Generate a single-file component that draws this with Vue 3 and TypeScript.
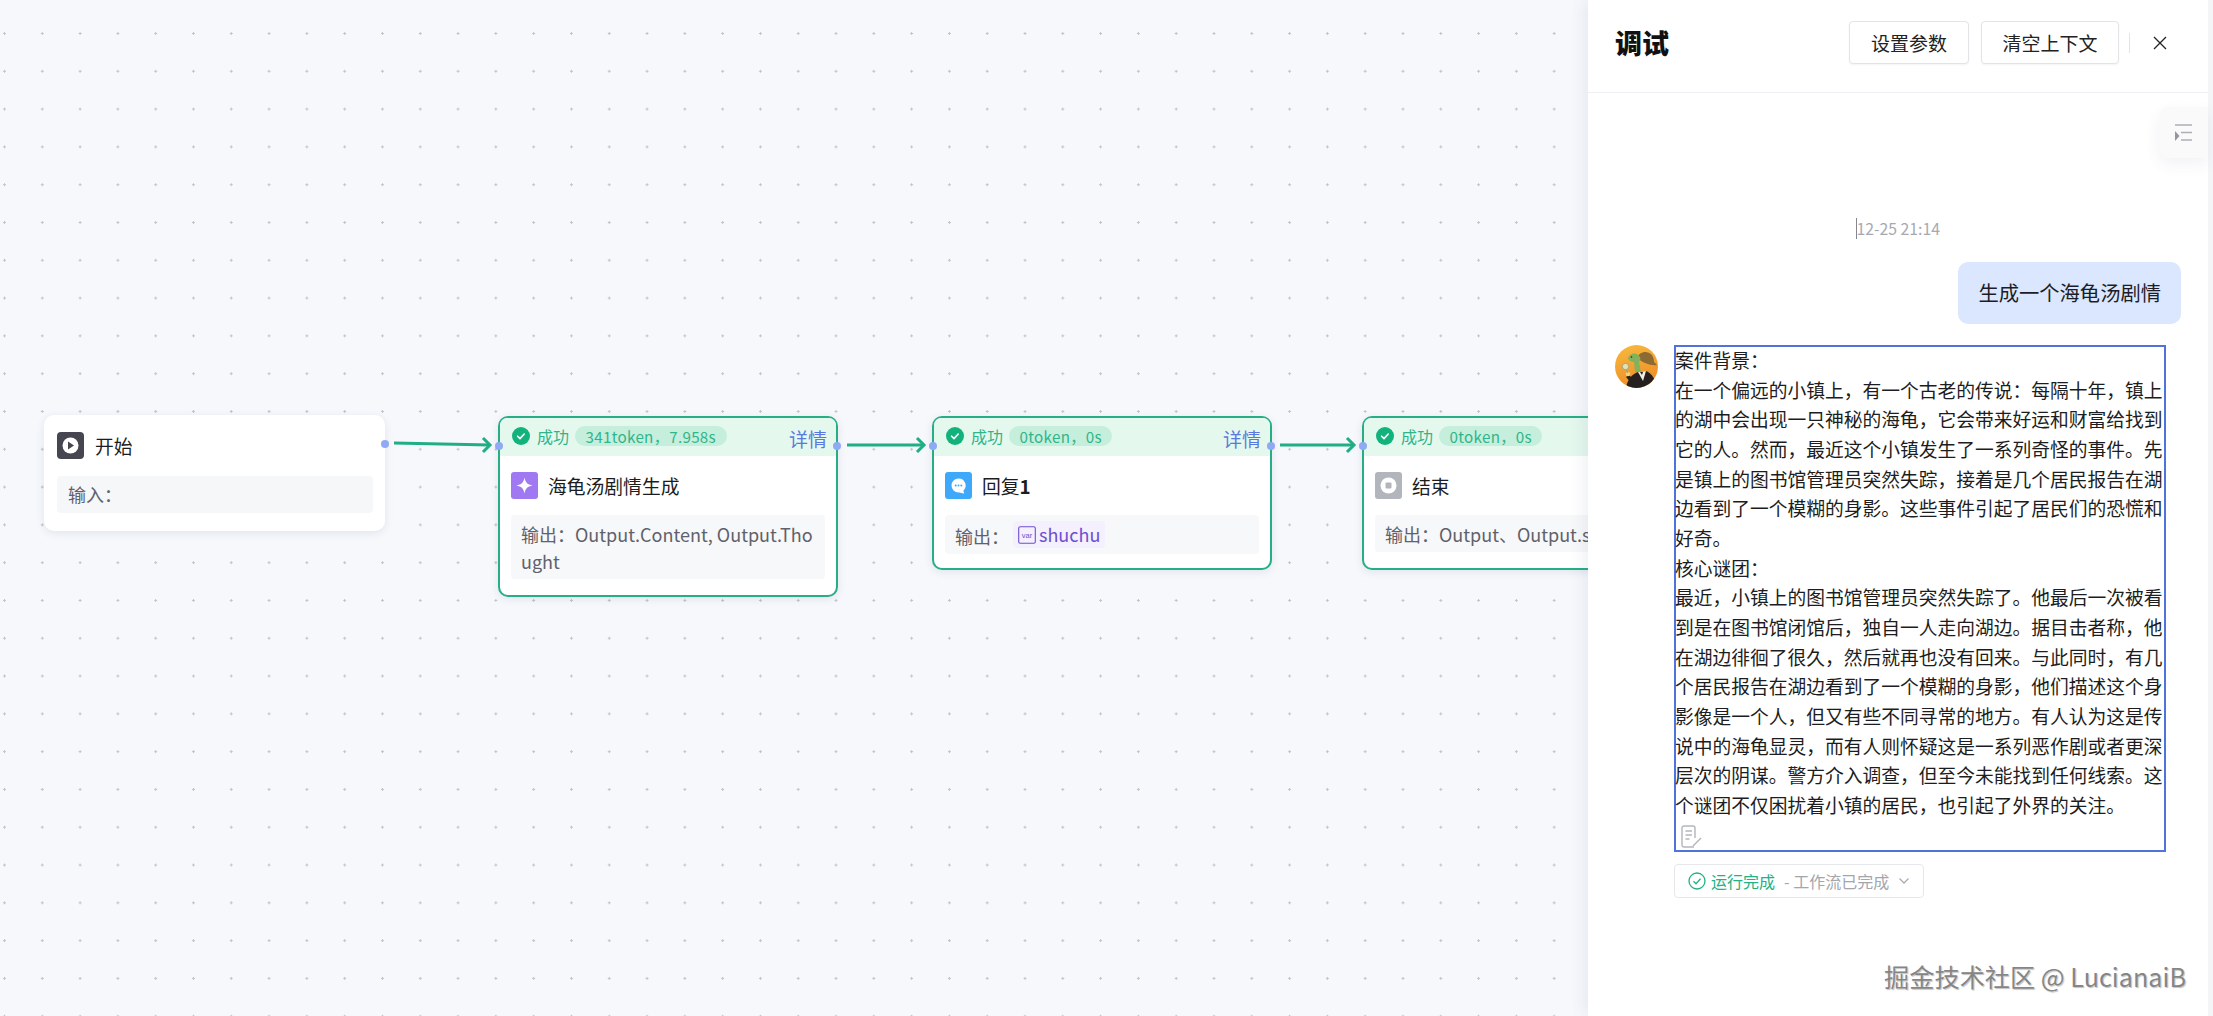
<template>
  <div class="page">
    <!-- Workflow canvas -->
    <div class="canvas">
      <svg class="edges" width="1588" height="1016">
        <g v-for="edge in edges" :key="edge.x1" fill="none" stroke="#1fae85" stroke-width="3">
          <path :d="`M${edge.x1} ${edge.y1} L${edge.x2} ${edge.y2}`" />
          <path :d="`M${edge.x2 - 7} ${edge.y2 - 7} L${edge.x2} ${edge.y2} L${edge.x2 - 7} ${edge.y2 + 7}`" />
        </g>
      </svg>

      <!-- Start node -->
      <div class="node node-start">
        <div class="node-title">
          <span class="node-icon icon-dark">
            <svg viewBox="0 0 27 27" width="27" height="27">
              <circle cx="13.5" cy="13.5" r="8" fill="#fff" />
              <path d="M11 9.6v7.8l6-3.9z" fill="#45464f" />
            </svg>
          </span>
          开始
        </div>
        <div class="node-body">输入：</div>
        <span class="handle handle-right" />
      </div>

      <!-- Run result nodes -->
      <div v-for="node in nodes" :key="node.title" class="node node-run" :class="node.cls">
        <div class="run-head">
          <svg class="run-check" viewBox="0 0 18 18" width="18" height="18">
            <circle cx="9" cy="9" r="9" fill="#12b27c" />
            <path d="M5.6 9.2l2.4 2.4 4.2-4.6" fill="none" stroke="#fff" stroke-width="1.6" stroke-linecap="round" stroke-linejoin="round" />
          </svg>
          <span class="run-state">成功</span>
          <span class="run-pill">{{ node.usage }}</span>
          <span v-if="node.detail" class="run-detail">详情</span>
        </div>
        <div class="node-title">
          <span class="node-icon" :class="node.iconCls">
            <svg v-if="node.icon === 'spark'" viewBox="0 0 27 27" width="27" height="27">
              <path d="M13.5 5.5c.9 5 3 7.1 8 8-5 .9-7.1 3-8 8-.9-5-3-7.1-8-8 5-.9 7.1-3 8-8z" fill="#fff" />
            </svg>
            <svg v-else-if="node.icon === 'chat'" viewBox="0 0 27 27" width="27" height="27">
              <path d="M13.5 6.5a7 7 0 1 0 0 14c1.9 0 3.4.7 5.8 1-.6-.9-.9-2-.8-3a7 7 0 0 0-5-12z" fill="#fff" />
              <circle cx="10.7" cy="13.5" r="1" fill="#3ea9fb" />
              <circle cx="13.5" cy="13.5" r="1" fill="#3ea9fb" />
              <circle cx="16.3" cy="13.5" r="1" fill="#3ea9fb" />
            </svg>
            <svg v-else viewBox="0 0 27 27" width="27" height="27">
              <circle cx="13.5" cy="13.5" r="8" fill="#fff" />
              <rect x="10.5" y="10.5" width="6" height="6" rx="1" fill="#b3b5bc" />
            </svg>
          </span>
          <span>{{ node.title }}<b v-if="node.suffix">{{ node.suffix }}</b></span>
        </div>
        <div class="node-body">
          <template v-if="node.varName">
            <span>输出：</span>
            <span class="var-tag">
              <svg viewBox="0 0 18 18" width="18" height="18">
                <rect x=".7" y=".7" width="16.6" height="16.6" rx="1.5" fill="none" stroke="#6c4fd0" stroke-width="1.1" />
                <text x="9" y="11.5" text-anchor="middle" class="var-mark">var</text>
              </svg>
              {{ node.varName }}
            </span>
          </template>
          <template v-else>输出：{{ node.output }}</template>
        </div>
        <span class="handle handle-left" />
        <span v-if="node.detail" class="handle handle-right" />
      </div>
    </div>

    <!-- Debug panel -->
    <aside class="panel">
      <header class="panel-head">
        <h2 class="panel-title">调试</h2>
        <button class="head-btn btn-params">设置参数</button>
        <button class="head-btn btn-clear">清空上下文</button>
        <span class="head-divider" />
        <svg class="head-close" viewBox="0 0 14 14" width="14" height="14">
          <path d="M1 1l12 12M13 1L1 13" stroke="#222" stroke-width="1.3" fill="none" />
        </svg>
      </header>

      <div class="side-toggle">
        <svg viewBox="0 0 17 18" width="17" height="18">
          <path d="M0 1h17M6 8.5h11M6 16h11" stroke="#aeb0b6" stroke-width="1.6" fill="none" />
          <path d="M0 7l4.5 5L0 17z" fill="#94969e" />
        </svg>
      </div>

      <div class="chat">
        <div class="chat-time"><span class="caret" />12-25 21:14</div>
        <div class="user-row">
          <div class="user-bubble">生成一个海龟汤剧情</div>
        </div>
        <div class="answer-row">
          <svg class="avatar" viewBox="0 0 43 43" width="43" height="43">
            <defs>
              <clipPath id="avatar-clip"><circle cx="21.5" cy="21.5" r="21.5" /></clipPath>
              <linearGradient id="avatar-bg" x1="0" y1="0" x2="0.3" y2="1">
                <stop offset="0" stop-color="#f8bb3f" />
                <stop offset="1" stop-color="#ee8e28" />
              </linearGradient>
            </defs>
            <g clip-path="url(#avatar-clip)">
              <rect width="43" height="43" fill="url(#avatar-bg)" />
              <path d="M22 13c2-6 9-8 14-4 2 2 3 5 3 8l3 3c-6 1-14-2-20-7z" fill="#8c6a34" />
              <path d="M13 13c1-4 7-6 10-3 3 2 3 5 1 7l2 10h-6l-1-10c-3 0-6-2-6-4z" fill="#84b25c" />
              <circle cx="16.5" cy="12" r="0.8" fill="#222" />
              <path d="M11 43c1-8 6-14 12-16l8-1c6 2 10 9 10 17z" fill="#26211f" />
              <path d="M23 27l8-1-3 10z" fill="#f3efe6" />
              <path d="M25 27h3l-1 3z" fill="#26211f" />
              <path d="M14 30l6 6-3 3-6-7z" fill="#26211f" />
              <circle cx="13" cy="29" r="2.3" fill="#f2d27a" />
              <circle cx="10.5" cy="21.5" r="3.2" fill="#dfe3b8" stroke="#a9a173" stroke-width="1" />
              <path d="M11.5 25l1.3 3" stroke="#a9a173" stroke-width="1.2" />
            </g>
          </svg>
          <div class="answer-col">
            <div class="answer-box">
              <p v-for="line in answer" :key="line">{{ line }}</p>
              <svg class="note-icon" viewBox="0 0 21 23" width="21" height="23">
                <path d="M13 22H3a2 2 0 0 1-2-2V3a2 2 0 0 1 2-2h9a2 2 0 0 1 2 2v10" fill="none" stroke="#b4b6bd" stroke-width="1.4" />
                <path d="M4.5 6H11M4.5 10H11M4.5 14h4" fill="none" stroke="#b4b6bd" stroke-width="1.4" />
                <path d="M12 21l8-8" fill="none" stroke="#b4b6bd" stroke-width="1.4" />
              </svg>
            </div>
            <div class="run-status">
              <svg viewBox="0 0 18 18" width="18" height="18">
                <circle cx="9" cy="9" r="8" fill="none" stroke="#22b285" stroke-width="1.3" />
                <path d="M5.5 9.3L8 11.8l4.5-5" fill="none" stroke="#22b285" stroke-width="1.3" />
              </svg>
              <span class="status-done">运行完成</span>
              <span class="status-note">- 工作流已完成</span>
              <svg class="status-arrow" viewBox="0 0 12 8" width="12" height="8">
                <path d="M1.5 1.5L6 6l4.5-4.5" fill="none" stroke="#a9acb3" stroke-width="1.3" />
              </svg>
            </div>
          </div>
        </div>
      </div>

      <div class="watermark">掘金技术社区 @ LucianaiB</div>
    </aside>
  </div>
</template>

<script setup lang="ts">
const edges = [
  { x1: 394, y1: 443, x2: 490, y2: 445 },
  { x1: 847, y1: 445, x2: 924, y2: 445 },
  { x1: 1280, y1: 445, x2: 1354, y2: 445 },
];

const nodes = [
  {
    cls: "node-llm",
    usage: "341token，7.958s",
    detail: true,
    title: "海龟汤剧情生成",
    icon: "spark",
    iconCls: "icon-purple",
    output: "Output.Content, Output.Thought",
  },
  {
    cls: "node-reply",
    usage: "0token，0s",
    detail: true,
    title: "回复",
    suffix: "1",
    icon: "chat",
    iconCls: "icon-blue",
    varName: "shuchu",
  },
  {
    cls: "node-end",
    usage: "0token，0s",
    detail: false,
    title: "结束",
    icon: "stop",
    iconCls: "icon-grey",
    output: "Output、Output.stream",
  },
];

const answer = [
  "案件背景：",
  "在一个偏远的小镇上，有一个古老的传说：每隔十年，镇上的湖中会出现一只神秘的海龟，它会带来好运和财富给找到它的人。然而，最近这个小镇发生了一系列奇怪的事件。先是镇上的图书馆管理员突然失踪，接着是几个居民报告在湖边看到了一个模糊的身影。这些事件引起了居民们的恐慌和好奇。",
  "核心谜团：",
  "最近，小镇上的图书馆管理员突然失踪了。他最后一次被看到是在图书馆闭馆后，独自一人走向湖边。据目击者称，他在湖边徘徊了很久，然后就再也没有回来。与此同时，有几个居民报告在湖边看到了一个模糊的身影，他们描述这个身影像是一个人，但又有些不同寻常的地方。有人认为这是传说中的海龟显灵，而有人则怀疑这是一系列恶作剧或者更深层次的阴谋。警方介入调查，但至今未能找到任何线索。这个谜团不仅困扰着小镇的居民，也引起了外界的关注。",
];
</script>

<style>
html,
body {
  margin: 0;
  background: #f6f8fc;
}
</style>

<style scoped>
.page {
  display: flex;
  width: 2213px;
  height: 1016px;
  overflow: hidden;
  font-family: "Noto Sans CJK SC", "Noto Sans", sans-serif;
  color: #1c1d21;
}

/* ── Canvas ── */
.canvas {
  position: relative;
  flex: 1;
  overflow: hidden;
  background-color: #f6f8fc;
  background-image: radial-gradient(circle at 1.5px 1.5px, #c2c4ca 1.1px, transparent 1.4px);
  background-size: 37.8px 37.8px;
  background-position: 3px 32px;
}

.edges {
  position: absolute;
  left: 0;
  top: 0;
}

.node {
  position: absolute;
  box-sizing: border-box;
  background: #fff;
  border-radius: 10px;
  box-shadow: 0 2px 8px rgba(40, 50, 90, 0.1);
}

.node-start {
  left: 44px;
  top: 415px;
  width: 341px;
  height: 116px;
  padding: 17px 12px 0 13px;
}

.node-run {
  top: 416px;
  width: 340px;
  height: 154px;
  border: 2.8px solid #27ae86;
}

.node-llm {
  left: 498px;
  height: 181px;
}

.node-reply {
  left: 932px;
}

.node-end {
  left: 1362px;
  width: 360px;
}

.run-head {
  display: flex;
  align-items: center;
  height: 38px;
  padding: 0 0 2px 12px;
  box-sizing: border-box;
  border-radius: 7px 7px 0 0;
  background: #e4f8ee;
}

.run-check {
  flex: none;
}

.run-state {
  margin-left: 7px;
  font-size: 16px;
  color: #2fb58a;
}

.run-pill {
  margin-left: 6px;
  padding: 0 10.5px;
  height: 20px;
  line-height: 20px;
  border-radius: 10px;
  background: #c5eedd;
  font-size: 15.2px;
  letter-spacing: 0.3px;
  color: #2fb58a;
}

.run-detail {
  margin-left: auto;
  margin-right: 9px;
  margin-top: 5px;
  font-size: 19px;
  color: #5a78e0;
}

.node-title {
  display: flex;
  align-items: center;
  gap: 11px;
  font-size: 18.8px;
  line-height: 27px;
}

.node-run .node-title {
  gap: 10px;
  padding: 16px 0 0 11px;
}

.node-icon {
  display: block;
  width: 27px;
  height: 27px;
  border-radius: 3px;
  flex: none;
}

.icon-dark {
  background: #45464f;
  border-radius: 4px;
}

.icon-purple {
  background: #a079f2;
}

.icon-blue {
  background: #3ea9fb;
}

.icon-grey {
  background: #b3b5bc;
}

.node-body {
  margin-top: 17px;
  padding: 5px 11px;
  box-sizing: border-box;
  min-height: 37px;
  font-size: 18px;
  line-height: 27px;
  word-break: break-all;
  background: #f6f7f9;
  border-radius: 4px;
  color: #5f616b;
}

.node-run .node-body {
  margin: 16px 11px 0;
  padding: 6px 10px 4px;
  background: #f7f8fa;
}

.var-tag {
  display: inline-flex;
  align-items: center;
  gap: 3px;
  margin-left: 4px;
  padding: 0 5px;
  border-radius: 4px;
  background: #f4f0fd;
  color: #6c4fd0;
}

.var-mark {
  font-size: 7.5px;
  fill: #6c4fd0;
  font-family: "Liberation Sans", sans-serif;
}

.handle {
  position: absolute;
  top: 24px;
  width: 8px;
  height: 8px;
  border-radius: 50%;
  background: #8fa9f5;
}

.handle-left {
  left: -5px;
}

.handle-right {
  right: -5px;
}

.node-start .handle {
  top: 25px;
  right: -4px;
}

/* ── Debug panel ── */
.panel {
  position: relative;
  flex: none;
  box-sizing: border-box;
  width: 625px;
  height: 1016px;
  background: #fff;
  border-right: 5px solid #f4f5f7;
  box-shadow: -6px 0 14px rgba(60, 70, 110, 0.07);
}

.panel-head {
  display: flex;
  align-items: center;
  box-sizing: border-box;
  height: 93px;
  padding: 0 41px 7px 27px;
  border-bottom: 1px solid #eeeff2;
}

.panel-title {
  margin: 0 auto 0 0;
  font-size: 27px;
  line-height: 36px;
  font-weight: 900;
  color: #111;
}

.head-btn {
  box-sizing: border-box;
  height: 43px;
  padding: 0;
  font-family: inherit;
  font-size: 19px;
  color: #222;
  background: #fff;
  border: 1px solid #e3e4e8;
  border-radius: 4px;
  box-shadow: 0 1px 2px rgba(0, 0, 0, 0.05);
}

.btn-params {
  width: 120px;
}

.btn-clear {
  width: 138px;
  margin-left: 12px;
}

.head-divider {
  width: 1px;
  height: 20px;
  margin: 0 23px 0 10px;
  background: #e3e4e8;
}

.side-toggle {
  position: absolute;
  right: 0;
  top: 107px;
  display: flex;
  align-items: center;
  justify-content: center;
  width: 49px;
  height: 51px;
  border-radius: 10px 0 0 10px;
  background: #fafafb;
  box-shadow: 0 6px 16px rgba(60, 70, 110, 0.07);
}

.chat {
  padding: 125px 27px 0;
}

.chat-time {
  display: flex;
  align-items: center;
  justify-content: center;
  height: 21px;
  font-size: 15.8px;
  line-height: 21px;
  color: #a7a9b2;
}

.caret {
  width: 1.5px;
  height: 21px;
  margin-right: -1px;
  background: #85878f;
}

.user-row {
  display: flex;
  justify-content: flex-end;
  margin-top: 23px;
}

.user-bubble {
  padding: 0 20px;
  height: 62px;
  line-height: 60px;
  font-size: 20.3px;
  background: #dae7fe;
  border-radius: 10px;
  color: #1c1d26;
}

.answer-row {
  display: flex;
  margin-top: 21px;
  gap: 16px;
}

.avatar {
  flex: none;
}

.answer-col {
  width: 492px;
}

.answer-box {
  box-sizing: border-box;
  height: 507px;
  border: 2px solid #4f73dc;
  color: #1c1d21;
  font-size: 18.75px;
  line-height: 29.67px;
}

.answer-box p {
  margin: 0;
  position: relative;
  top: -2px;
  left: -1px;
}

.note-icon {
  display: block;
  margin: 3px 0 0 5px;
}

.run-status {
  display: inline-flex;
  align-items: center;
  box-sizing: border-box;
  width: 250px;
  height: 34px;
  margin-top: 12px;
  padding-left: 13px;
  border: 1px solid #e6e7ea;
  border-radius: 4px;
  font-size: 16px;
}

.status-done {
  margin-left: 5px;
  color: #22b285;
}

.status-note {
  margin-left: 9px;
  color: #a3a6ad;
}

.status-arrow {
  margin-left: 9px;
}

.watermark {
  position: absolute;
  right: 22px;
  bottom: 24px;
  font-size: 25.2px;
  line-height: 32px;
  color: #858585;
  text-shadow: 0 0 1px #fff, 1px 1px 1px #bdbdbd;
  white-space: nowrap;
}
</style>
